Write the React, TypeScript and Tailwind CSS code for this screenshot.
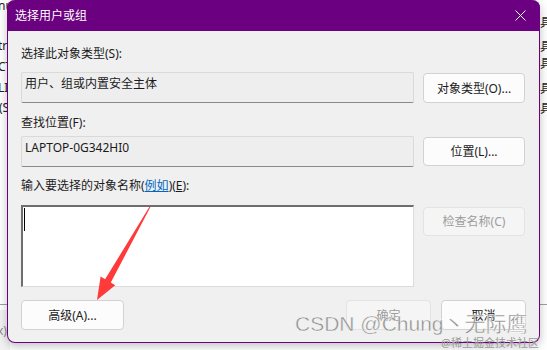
import React from "react";

const FONT = "font-['Noto_Sans','Noto_Sans_CJK_SC',sans-serif]";

function Btn({ label, className = "", disabled = false }: { label: React.ReactNode; className?: string; disabled?: boolean }) {
  return (
    <div
      className={`flex items-center justify-center rounded-[4px] border text-[12px] ${
        disabled
          ? "bg-[#f5f5f5] border-[#e3e3e3] text-[#9d9d9d]"
          : "bg-[#fcfcfc] border-[#d2d2d2] text-[#1b1b1b]"
      } ${className}`}
    >
      {label}
    </div>
  );
}

function ReadBox({ text }: { text: string }) {
  return (
    <div className="w-[393px] h-[31px] bg-[#eeeeee] border border-[#dadada] border-b-[#8a8a8a] rounded-[2px] pl-[3px] pt-[2px] text-[12px] leading-[17px] text-[#1b1b1b]">
      {text}
    </div>
  );
}

export default function App() {
  return (
    <div className={`relative w-[547px] h-[350px] overflow-hidden bg-white ${FONT}`}>
      {/* window behind the dialog */}
      <div className="absolute left-0 top-0 w-[10px] h-[350px] text-[12px] leading-[17px] text-[#222]">
        <div className="absolute top-[-3px] left-[-2px]">nu</div>
        <div className="absolute top-[37px] left-[-2px]">tr</div>
        <div className="absolute top-[58px] left-[-2px]">CT</div>
        <div className="absolute top-[79px] left-[-2px]">LI</div>
        <div className="absolute top-[99px] left-[-1px]">(S</div>
        <div className="absolute top-[304px] left-0 w-[10px] h-[1px] bg-[#a0a0a0]" />
        <div className="absolute top-[310px] left-0 w-[10px] h-[40px] bg-[#f2f2f2] text-[#8a8a8a]">
          <span className="absolute top-[12px] left-[-3px]">x)</span>
        </div>
      </div>
      <div className="absolute right-0 top-0 w-[8px] h-[350px] text-[12px] leading-[17px] text-[#222]">
        <div className="absolute top-[14px] left-[1px]">具</div>
        <div className="absolute top-[38px] left-[1px]">具</div>
        <div className="absolute top-[55px] left-[1px]">具</div>
        <div className="absolute top-[80px] left-[1px]">具</div>
        <div className="absolute top-[100px] left-[1px]">具</div>
        <div className="absolute top-[304px] left-0 w-[8px] h-[1px] bg-[#a0a0a0]" />
      </div>

      {/* dialog */}
      <div className="absolute left-[7px] top-0 w-[533px] h-[343px] flex flex-col bg-[#f0f0f0] border border-t-0 border-[#6b0080] rounded-t-[8px] rounded-b-[8px] shadow-[0_3px_10px_rgba(0,0,0,0.25)]">
        <div className="h-[31px] -mx-[1px] bg-[#6b0080] rounded-t-[8px] flex items-center justify-between pl-[8px] pr-[14px] text-white text-[12px]">
          <span>选择用户或组</span>
          <svg width="11" height="11" viewBox="0 0 11 11">
            <path d="M0.5 0.5L10.5 10.5M10.5 0.5L0.5 10.5" stroke="white" strokeWidth="1" />
          </svg>
        </div>

        <div className="flex flex-col px-[13px] text-[12px] leading-[17px] text-[#1b1b1b]">
          <div className="mt-[14px] h-[17px]">选择此对象类型(S):</div>
          <div className="mt-[10px] flex gap-[9px]">
            <ReadBox text="用户、组或内置安全主体" />
            <Btn label="对象类型(O)..." className="w-[102px] h-[30px] mt-[1px]" />
          </div>

          <div className="mt-[11px] h-[17px]">查找位置(F):</div>
          <div className="mt-[5px] flex gap-[9px]">
            <ReadBox text="LAPTOP-0G342HI0" />
            <Btn label="位置(L)..." className="w-[102px] h-[29px] mt-[1px]" />
          </div>

          <div className="mt-[10px] h-[17px]">
            输入要选择的对象名称(<span className="text-[#0067c0] underline">例如</span>)(<span className="underline">E</span>):
          </div>
          <div className="mt-[11px] flex gap-[9px]">
            <div className="w-[393px] h-[82px] bg-white border-2 border-[#6e6e6e] border-r-[#dcdcdc] border-b-[#dcdcdc] border-r border-b pl-[1px] pt-[1px]">
              <div className="w-[1px] h-[23px] bg-black" />
            </div>
            <Btn label="检查名称(C)" disabled className="w-[102px] h-[29px] mt-[2px]" />
          </div>

          <div className="mt-[13px] flex items-center">
            <Btn label="高级(A)..." className="w-[103px] h-[30px]" />
            <div className="flex-1" />
            <Btn label="确定" disabled className="w-[85px] h-[30px]" />
            <Btn label="取消" className="w-[85px] h-[30px] ml-[10px]" />
          </div>
        </div>
      </div>

      {/* annotation arrow */}
      <svg className="absolute left-0 top-0" width="547" height="350">
        <polygon
          points="150.4,207 110.8,282.6 115.2,285.2 97,300 100.6,276.6 105.1,279.3 149.6,206.6"
          fill="#ff3a3a"
        />
      </svg>

      {/* watermark */}
      <div className="absolute left-[295px] top-[311px] text-[21px] leading-[26px] text-[#8c8c8c] [-webkit-text-stroke:0.4px_#ffffff] whitespace-nowrap font-['Liberation_Sans','Noto_Sans_CJK_SC',sans-serif]">
        CSDN @Chung丶无际鹰
      </div>
      <div className="absolute left-[441px] top-[336px] text-[11px] leading-[13px] text-[#9a9a9a] whitespace-nowrap">
        @稀土掘金技术社区
      </div>
    </div>
  );
}
